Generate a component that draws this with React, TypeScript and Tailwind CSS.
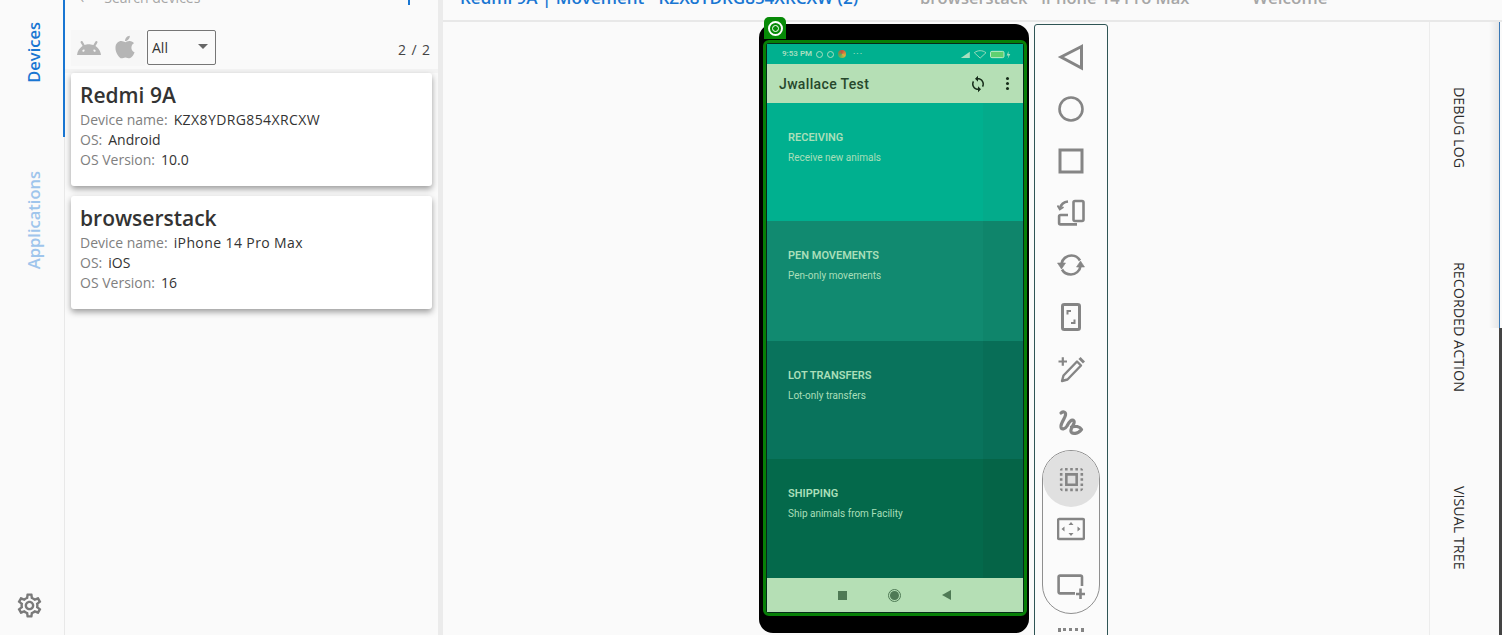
import type { ReactNode } from 'react';
import { FaApple } from 'react-icons/fa';
import { MdOutlineSelectAll, MdOutlineSettings } from 'react-icons/md';
import { SiAndroid } from 'react-icons/si';

const devices = [
  { name: 'Redmi 9A', device: 'KZX8YDRG854XRCXW', os: 'Android', version: '10.0' },
  { name: 'browserstack', device: 'iPhone 14 Pro Max', os: 'iOS', version: '16' },
];

const sections = [
  { title: 'RECEIVING', sub: 'Receive new animals', bg: 'bg-[#00b08f]', side: 'bg-[#03ab8b]', h: 'h-[118px]' },
  { title: 'PEN MOVEMENTS', sub: 'Pen-only movements', bg: 'bg-[#118a70]', side: 'bg-[#0f856b]', h: 'h-[120px]' },
  { title: 'LOT TRANSFERS', sub: 'Lot-only transfers', bg: 'bg-[#09735c]', side: 'bg-[#086e57]', h: 'h-[118px]' },
  { title: 'SHIPPING', sub: 'Ship animals from Facility', bg: 'bg-[#04694b]', side: 'bg-[#056447]', h: 'h-[119px]' },
];

const Tool = ({ children, h = 'h-[52px]' }: { children: ReactNode; h?: string }) => (
  <div className={`flex items-center justify-center shrink-0 ${h}`}>
    <svg viewBox="0 0 28 28" className="w-7 h-7" fill="none" stroke="#858585" strokeWidth="2.6">
      {children}
    </svg>
  </div>
);

const Toolbar = () => (
  <div className="w-[74px] ml-[5px] mt-[2px] h-[640px] shrink-0 border border-[#2f5555] rounded-t-[3px] bg-[#fbfbfb] flex flex-col items-center pt-[6px]">
    <Tool>
      <path d="M24.5 3.5 L4 14 L24.5 25 Z" strokeWidth="3" />
    </Tool>
    <Tool>
      <circle cx="14" cy="14" r="11.5" />
    </Tool>
    <Tool>
      <rect x="3" y="3" width="22" height="22" strokeWidth="3" />
    </Tool>
    <Tool>
      <rect x="16.5" y="2" width="10" height="20" rx="1.5" />
      <path d="M11 16 H3.5 a1.4 1.4 0 0 0 -1.4 1.4 V24 a1.4 1.4 0 0 0 1.4 1.4 H20 M3 9 C4 5.5 7 3 11 2.5" />
      <path d="M0.5 6.5 L2.8 10.5 L6.5 8" strokeWidth="1.8" />
    </Tool>
    <Tool>
      <path d="M4.5 13 C5 8 9.5 4.5 14.5 4.5 C18 4.5 21 6 23 9.5 M23.5 15 C23 20 18.5 23.5 14 23.5 C10 23.5 7 22 5 18.5" />
      <path d="M0.5 12 L8.5 12 L4.5 18 Z M19.5 16 L27.5 16 L23.5 10 Z" fill="#858585" strokeWidth="0.6" />
    </Tool>
    <Tool>
      <rect x="5.5" y="1.5" width="17" height="25" rx="1.8" strokeWidth="3" />
      <path d="M10.5 11.5 V8 H14 M17.5 16.5 V20 H14" strokeWidth="2" />
    </Tool>
    <Tool>
      <path d="M1.5 6.5 H10 M5.8 2.2 V10.8" strokeWidth="2.2" />
      <path d="M20 6.5 L24 10.5 L10.5 24.5 L5 26 L6.5 20.5 Z" strokeWidth="2.4" strokeLinejoin="round" />
      <path d="M22.5 3 L27 7.5" strokeWidth="3" />
    </Tool>
    <div className="h-[52px] flex items-center justify-center pt-[4px]">
      <svg viewBox="0 0 28 28" className="w-7 h-7" fill="none" stroke="#858585" strokeWidth="3.2" strokeLinecap="round">
        <path d="M4 4 C6.5 2 9 3 8.5 6 C8 9.5 3.5 14 4 18 C4.5 21 8 20.5 10 17 C12 13 15 9.5 17 12 C18.5 14.5 13 19 14 22.5 C15 25.5 21 25 24.5 20.5 M14.5 18 C18 16.5 23 17.5 24.5 20.5" />
      </svg>
    </div>
    <div className="w-[58px] h-[164px] mt-[3px] shrink-0 rounded-full border border-[#8f8f8f] flex flex-col items-center">
      <div className="w-14 h-14 shrink-0 rounded-full bg-[#e0e0e0] flex items-center justify-center">
        <MdOutlineSelectAll className="text-[#858585]" size={31} />
      </div>
      <Tool h="h-[44px]">
        <rect x="1" y="4" width="26" height="20" rx="1.4" />
        <path d="M14 7 L16.5 10 H11.5 Z M14 21 L16.5 18 H11.5 Z M4.5 14 L7.5 11.5 V16.5 Z M23.5 14 L20.5 11.5 V16.5 Z" fill="#858585" stroke="none" />
      </Tool>
      <Tool h="h-[68px]">
        <path d="M25 15 V6 a1.4 1.4 0 0 0 -1.4 -1.4 H3 a1.4 1.4 0 0 0 -1.4 1.4 V21 a1.4 1.4 0 0 0 1.4 1.4 H18 M19 23 H29 M23.5 17.5 V28" />
      </Tool>
    </div>
    <div className="mt-[14px] w-[26px] h-[18px] shrink-0 border-t-[3px] border-x-[3px] border-dotted border-[#858585]" />
  </div>
);

const Phone = () => (
  <div className="relative w-[270px] h-[609px] mt-[2px] shrink-0 bg-black rounded-[14px] pl-[4px] pt-[16px]">
    <div className="absolute -top-[7px] left-[5px] w-[22px] h-[22px] rounded-t-[5px] bg-[#078a07] flex items-center justify-center">
      <div className="w-[15px] h-[15px] rounded-full border-2 border-white flex items-center justify-center">
        <div className="w-[7px] h-[7px] rounded-full border border-white" />
      </div>
    </div>
    <div className="w-[264px] h-[576px] border-[3px] border-[#078007] rounded-[6px] overflow-hidden p-[1px] bg-[#062a1a]">
      <div className="flex flex-col font-['Roboto',sans-serif]">
        <div className="h-[20px] shrink-0 bg-[#00b08f] flex items-center justify-between pl-[15px] pr-[11px] text-[8px] text-[#a8dfc0] font-semibold">
          <div className="flex items-center gap-[4px]">
            <span>9:53 PM</span>
            <span className="w-[7px] h-[7px] rounded-full border border-[#a8dfc0]" />
            <span className="w-[7px] h-[7px] rounded-full border border-[#a8dfc0]" />
            <span className="w-[8px] h-[8px] rounded-full bg-[conic-gradient(#c9503c,#d8b23c,#4faf5a,#c9503c)]" />
            <span className="ml-[3px] tracking-[1px]">···</span>
          </div>
          <svg viewBox="0 0 56 10" className="w-[52px] h-[9px]">
            <path d="M0 9 L10 9 L10 2 Z" fill="#a8dfc0" />
            <path d="M15 3 C19 0 24 0 28 3 L21.5 9 Z" fill="none" stroke="#a8dfc0" />
            <rect x="33" y="1.5" width="15" height="7" rx="1.5" fill="#5fd070" stroke="#c8f0d0" />
            <path d="M53 1 L51 6 H53 L52 10 L55 4.5 H53 Z" fill="#a8dfc0" />
          </svg>
        </div>
        <div className="h-[39px] shrink-0 bg-[#b5dfb5] flex items-center justify-between pl-[12px] pr-[14px] text-[14px] font-medium tracking-[0.35px] text-[#27482c]">
          <span className="pt-[2px]">Jwallace Test</span>
          <div className="flex items-center gap-[19px]">
            <svg viewBox="0 0 24 24" className="w-[18px] h-[18px]" fill="#162c19">
              <path d="M12 4V1L8 5l4 4V6c3.31 0 6 2.69 6 6 0 1.01-.25 1.97-.7 2.8l1.46 1.46C19.54 15.03 20 13.57 20 12c0-4.42-3.58-8-8-8zm0 14c-3.31 0-6-2.69-6-6 0-1.01.25-1.97.7-2.8L5.24 7.74C4.46 8.97 4 10.43 4 12c0 4.42 3.58 8 8 8v3l4-4-4-4v3z" />
            </svg>
            <div className="flex flex-col gap-[2px]">
              <span className="w-[3px] h-[3px] rounded-full bg-[#162c19]" />
              <span className="w-[3px] h-[3px] rounded-full bg-[#162c19]" />
              <span className="w-[3px] h-[3px] rounded-full bg-[#162c19]" />
            </div>
          </div>
        </div>
        {sections.map((s) => (
          <div key={s.title} className={`${s.h} ${s.bg} shrink-0 flex`}>
            <div className="flex-1 pl-[21px] pt-[28px]">
              <div className="text-[11px] leading-[14px] font-semibold text-[#a9dfb9]">{s.title}</div>
              <div className="mt-[6px] text-[10px] leading-[13px] text-[#a9dfb9]">{s.sub}</div>
            </div>
            <div className={`w-[40px] ${s.side}`} />
          </div>
        ))}
        <div className="h-[34px] shrink-0 bg-[#b5dfb5] flex items-center justify-center gap-[41px] pr-[2px]">
          <span className="w-[9px] h-[9px] bg-[#4f7a55]" />
          <span className="w-[13px] h-[13px] rounded-full border border-[#4f7a55] flex items-center justify-center">
            <span className="w-[9px] h-[9px] rounded-full bg-[#4f7a55]" />
          </span>
          <svg viewBox="0 0 9 10" className="w-[9px] h-[10px]" fill="#4f7a55">
            <path d="M9 0 V10 L0 5 Z" />
          </svg>
        </div>
      </div>
    </div>
  </div>
);

const SideRail = () => (
  <div className="w-[65px] shrink-0 border-r border-[#e8e8e8] flex flex-col">
    <div className="h-[137px] flex items-start justify-center border-r-[2px] -mr-[1px] border-[#1976d2] pt-[22px] pl-[5px]">
      <span className="[writing-mode:vertical-rl] rotate-180 text-[16.5px] font-semibold text-[#1976d2]">Devices</span>
    </div>
    <div className="flex justify-center pt-[34px] pl-[5px]">
      <span className="[writing-mode:vertical-rl] rotate-180 text-[16.5px] font-semibold text-[#9fc5ec]">Applications</span>
    </div>
    <div className="mt-auto mb-[15px] flex justify-center pr-[5px]">
      <MdOutlineSettings className="text-[#7a7a7a]" size={29} />
    </div>
  </div>
);

const DeviceCard = ({ d }: { d: (typeof devices)[number] }) => (
  <div className="h-[113px] bg-white rounded-[3px] shadow-[0_3px_6px_rgba(0,0,0,0.38)] pl-[9px] pt-[8px] text-[14px] leading-[20px] text-[#333333]">
    <div className="text-[21px] leading-[28px] font-semibold mb-[1px]">{d.name}</div>
    <div>
      <span className="text-[#808080] mr-[6px]">Device name:</span>
      <span className="tracking-[0.4px]">{d.device}</span>
    </div>
    <div>
      <span className="text-[#808080] mr-[6px]">OS:</span>
      {d.os}
    </div>
    <div>
      <span className="text-[#808080] mr-[6px]">OS Version:</span>
      {d.version}
    </div>
  </div>
);

const DevicePanel = () => (
  <div className="w-[373px] shrink-0 flex flex-col bg-[#fafafa]">
    <div className="h-[30px] shrink-0 overflow-hidden flex items-start pl-[15px] pr-[28px] text-[14px] text-[#a6a6a6]">
      <span className="-mt-[12px] leading-[20px]">‹</span>
      <span className="ml-[20px] -mt-[12px] leading-[20px]">Search devices</span>
      <span className="ml-auto w-[2px] h-[5px] bg-[#1976d2]" />
    </div>
    <div className="flex items-start pl-[6px] pr-[7px] h-[36px]">
      <div className="flex items-center gap-[11px] h-[36px] w-[74px] pl-[6px] bg-[#f7f7f7]">
        <SiAndroid className="text-[#b5b5b5]" size={24} />
        <FaApple className="text-[#b5b5b5] -mt-[2px]" size={26} />
      </div>
      <div className="relative ml-[2px] w-[69px] h-[35px] border border-[#767676] rounded-[2px] flex items-center pl-[4px] text-[14px] text-[#333333]">
        All
        <span className="absolute right-[7px] top-[13px] w-0 h-0 border-x-[5px] border-x-transparent border-t-[5px] border-t-[#666666]" />
      </div>
      <span className="ml-auto mt-[9px] text-[14px] tracking-[0.9px] text-[#444444]">2 / 2</span>
    </div>
    <div className="mt-[3px] h-[4px] shrink-0 bg-[#f3f3f3]" />
    <div className="flex-1 px-[6px] flex flex-col gap-[10px]">
      {devices.map((d) => (
        <DeviceCard key={d.name} d={d} />
      ))}
    </div>
  </div>
);

const Tabs = () => (
  <div className="h-[22px] shrink-0 flex border-b-2 border-[#e8e8e8] overflow-hidden text-[17px] leading-[20px] font-semibold text-[#a6a6a6]">
    <div className="w-[460px] h-[22px] shrink-0 border-b-2 border-[#1976d2] pl-[17px] text-[#1976d2] whitespace-nowrap">
      <div className="-mt-[12px]">Redmi 9A | Movement - KZX8YDRG854XRCXW (2)</div>
    </div>
    <div className="pl-[17px] w-[349px] shrink-0 whitespace-nowrap text-[16.5px]">
      <div className="-mt-[12px]">browserstack - iPhone 14 Pro Max</div>
    </div>
    <div className="whitespace-nowrap">
      <div className="-mt-[12px]">Welcome</div>
    </div>
  </div>
);

const RightRail = () => (
  <div className="ml-auto w-[73px] h-full shrink-0 border-l border-[#ececec] flex flex-col items-center pt-[65px] pr-[13px] text-[14.3px] text-[#2b2b2b]">
    <div className="[writing-mode:vertical-rl] h-[175px]">DEBUG LOG</div>
    <div className="[writing-mode:vertical-rl] h-[224px]">RECORDED ACTION</div>
    <div className="[writing-mode:vertical-rl]">VISUAL TREE</div>
  </div>
);

const App = () => {
  return (
    <div className="h-[635px] w-[1502px] overflow-hidden flex bg-[#fafafa] font-['Open_Sans',sans-serif]">
      <SideRail />
      <DevicePanel />
      <div className="w-[5px] shrink-0 bg-[#ebebeb]" />
      <div className="relative flex-1 flex flex-col min-w-0">
        <Tabs />
        <div className="flex-1 flex min-h-0">
          <div className="w-[316px] shrink-0" />
          <Phone />
          <Toolbar />
          <RightRail />
        </div>
        <div className="absolute right-[3px] top-[22px] h-[306px] w-[10px] bg-gradient-to-r from-transparent to-[#e6e6e6]" />
        <div className="absolute right-[2px] top-[22px] h-[306px] w-[1px] bg-[#3a78b5]" />
        <div className="absolute right-0 top-[328px] bottom-0 w-[3px] bg-[#444444]" />
      </div>
    </div>
  );
};

export default App;
